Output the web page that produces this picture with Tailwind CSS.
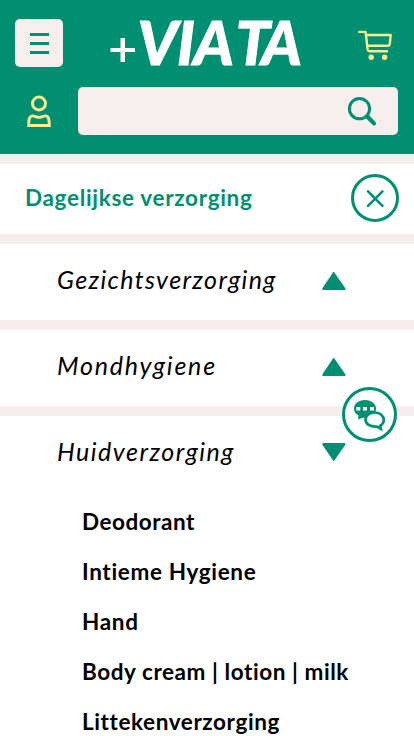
<!DOCTYPE html>
<html lang="nl">
<head>
<meta charset="utf-8">
<meta name="viewport" content="width=device-width, initial-scale=1">
<title>Viata</title>
<script src="https://cdn.jsdelivr.net/npm/@tailwindcss/browser@4"></script>
</head>
<body class="h-[736px] overflow-hidden bg-white font-['Lato',sans-serif] text-black">
<header class="h-[154px] bg-[#009071] pt-[19px]">
  <div class="flex h-12 items-start pl-[15px]">
    <button class="flex size-12 flex-col items-center justify-center gap-[6px] rounded-[5px] bg-[#f7eeee] pl-px" aria-label="Menu">
      <span class="h-[3px] w-[19px] bg-[#009071]"></span>
      <span class="h-[3px] w-[19px] bg-[#009071]"></span>
      <span class="h-[3px] w-[19px] bg-[#009071]"></span>
    </button>
    <svg class="ml-[45px] h-12 w-[200px] overflow-visible" viewBox="108 19 200 48" fill="#fff">
      <path d="M110.500 48h10V38h4.500v10h10v4h-10v10h-4.500V52h-10z"/>
      <text x="137.500 177 193.500 235.500 261.500" y="64.700" font-family="Lato, sans-serif" font-size="61.500" font-weight="900" font-style="italic" stroke="#fff" stroke-width="0.900">VIATA</text>
    </svg>
    <svg class="mt-[9px] ml-[48px] h-9 w-10" viewBox="356 28 40 36" fill="none" stroke="#fced90" stroke-width="2.400" stroke-linecap="round" stroke-linejoin="round">
      <path d="M359.300 31.900h6.300l2 17.300c.2 1.400.8 2 2 2H387"/>
      <path d="M366.300 35h24.400l-.9 8.800c-.2 1.400-.8 2-2 2h-20.300"/>
      <circle cx="371.200" cy="57.200" r="2.700" fill="#fced90" stroke="none"/><circle cx="384.600" cy="57.200" r="2.700" fill="#fced90" stroke="none"/>
    </svg>
  </div>
  <div class="mt-5 flex h-12 items-center pl-[24px]">
    <svg class="h-9 w-[30px]" viewBox="24 93 30 36" fill="none" stroke="#fced90" stroke-width="2.900">
      <circle cx="39" cy="103.500" r="6.500"/>
      <path d="M28.700 125.500c0-5.500.3-9.600 4-9.600 2.200 0 3.500 1.400 6.300 1.400s4-1.400 6.300-1.400c3.700 0 4 4.100 4 9.600z"/>
    </svg>
    <div class="ml-6 flex h-12 w-80 items-center justify-end rounded-[5px] bg-[#f7eeee] pr-5">
      <svg class="size-8" viewBox="346 95 32 32" fill="none" stroke="#009071">
        <circle cx="359.500" cy="108.700" r="10.100" stroke-width="3"/>
        <path d="m367.500 116.700 6.500 6.700" stroke-width="4.200" stroke-linecap="round"/>
      </svg>
    </div>
  </div>
</header>
<main>
  <div class="flex h-20 items-center justify-between border-t-10 border-[#f7eded] pr-[15px] pl-[25px]">
    <h1 class="-mt-[3px] text-[22.500px] leading-[30px] font-bold tracking-[0.680px] whitespace-nowrap text-[#009071]">Dagelijkse verzorging</h1>
    <button class="-mt-[2px] size-12" aria-label="Sluiten">
      <svg class="size-12" viewBox="0 0 48 48" fill="none" stroke="#009071"><circle cx="24" cy="24" r="22.500" stroke-width="3"/><path d="m17 17.300 14.500 14.500m0-14.500L17 31.800" stroke-width="2.500" stroke-linecap="round"/></svg>
    </button>
  </div>
  <div class="flex h-[86px] items-center justify-between border-t-10 border-[#f7eded] pr-[68px] pl-[57px]">
    <h2 class="-mt-[6px] text-[25px] leading-[34px] italic tracking-[1.350px] whitespace-nowrap">Gezichtsverzorging</h2>
    <svg class="-mt-[2px] h-[19px] w-6" viewBox="0 0 24 19" fill="#009071"><path d="M11.200.3q.5-.7 1 0L23.300 16.200q.6 1.800-.7 1.800H1.200Q0 18 .4 16.200z"/></svg>
  </div>
  <div class="flex h-[86px] items-center justify-between border-t-10 border-[#f7eded] pr-[68px] pl-[57px]">
    <h2 class="-mt-[6px] text-[25px] leading-[34px] italic tracking-[1.780px] whitespace-nowrap">Mondhygiene</h2>
    <svg class="-mt-[2px] h-[19px] w-6" viewBox="0 0 24 19" fill="#009071"><path d="M11.200.3q.5-.7 1 0L23.300 16.200q.6 1.800-.7 1.800H1.200Q0 18 .4 16.200z"/></svg>
  </div>
  <div class="flex h-[86px] items-center justify-between border-t-10 border-[#f7eded] pr-[68px] pl-[57px]">
    <h2 class="-mt-[6px] text-[25px] leading-[34px] italic tracking-[1.500px] whitespace-nowrap">Huidverzorging</h2>
    <svg class="-mt-[4px] h-[19px] w-6" viewBox="0 0 24 19" fill="#009071"><path d="M11.200 17.700q.5.700 1 0L23.300 1.800Q23.900 0 22.600 0H1.200Q0 0 .4 1.800z"/></svg>
  </div>
  <ul class="flex flex-col pt-[5px] pl-[82px] text-[22.500px] leading-[50px] font-bold whitespace-nowrap">
    <li class="tracking-[0.520px]">Deodorant</li>
    <li class="tracking-[0.660px]">Intieme Hygiene</li>
    <li class="tracking-[0.700px]">Hand</li>
    <li class="tracking-[0.570px]">Body cream | lotion | milk</li>
    <li class="tracking-[0.590px]">Littekenverzorging</li>
  </ul>
</main>
<button class="fixed top-[387px] left-[342px] size-[55px]" aria-label="Chat">
  <svg class="size-[55px]" viewBox="0 0 55 55">
    <circle cx="27.500" cy="27.500" r="26" fill="#fff" stroke="#009071" stroke-width="3"/>
    <path d="M23 13c6.500 0 11 3.700 11 8.500S30 30.500 23 30.500c-1.300 0-2.200.2-3 .5l-4 1.500.5-4C13.700 27 12 24.800 12 21.500 12 16.700 16.500 13 23 13z" fill="#009071"/>
    <path d="M33 25.500c5 0 8.800 3.400 8.800 7.500 0 2.600-1.600 4.500-3.600 5.900l.6 2.900-4-2.200c-6.800.4-11.200-2.400-11.200-7.200 0-4.200 4-6.900 9.400-6.900z" fill="#fff" stroke="#009071" stroke-width="2.700"/>
    <path d="M14.300 20h4v3.500h-4zm6.700 0h4v3.500h-4zm7 0h4v3.500h-4z" fill="#fff"/>
  </svg>
</button>
</body>
</html>
